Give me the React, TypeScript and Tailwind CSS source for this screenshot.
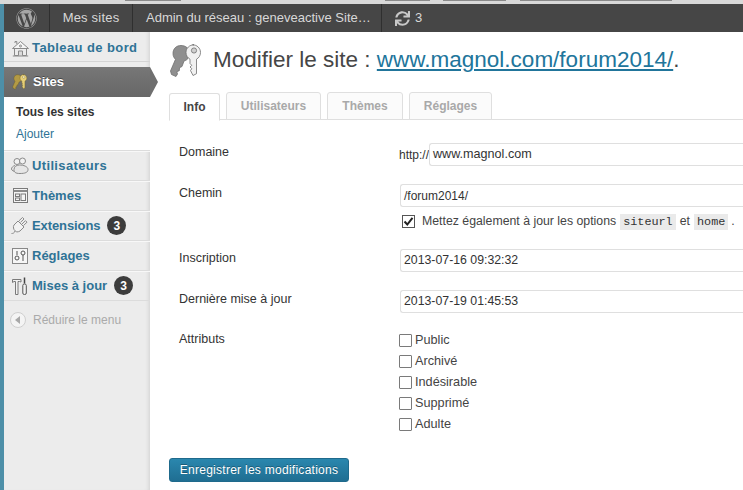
import React from "react";
import { FaWordpress, FaSync } from "react-icons/fa";

const Keys = ({ size, back = "#8f8f8f", front = "#f1f1f1", stroke = "#6f6f6f", hole = "#cfcfcf" }: { size: number; back?: string; front?: string; stroke?: string; hole?: string }) => (
  <svg width={size} height={size} viewBox="0 0 34 34" className="shrink-0">
    <path d="M12 1.500c-4.800 0-8 3.300-8 8 0 2.500 1 4.500 2.500 5.800L1.500 27l1 3.500 4.500 2 1.500-2.500-.7-2.300 2.500-1 .2-3 2.500-1.200L15 17c3.500-.8 5.500-3.800 5.500-7.500 0-4.700-3.500-8-8.500-8z" fill={back} stroke={stroke} strokeWidth="0.8" />
    <path d="M25 .8c-4.500 0-8 3.300-8 7.700 0 3 1.600 5.400 4 6.700v4.300l1.800 1.800-1.800 1.700 1.800 1.700-1.300 1.800 2.500 5 3.500-1.800V15.200c2.400-1.300 4-3.700 4-6.700 0-4.400-3.500-7.700-8-7.700z" fill={front} stroke={stroke} strokeWidth="0.8" />
    <circle cx="25" cy="6.500" r="2.600" fill={hole} stroke={stroke} strokeWidth="0.8" />
  </svg>
);

const HomeIcon = () => (
  <svg width="17" height="17" viewBox="0 0 17 17" fill="none" stroke="#8a8a8a" strokeWidth="1">
    <path d="M.5 8.500 8.500 1.500l8 7z" fill="#f6f6f6" />
    <path d="M3 3V1.500h1.800V4M2.500 8.500h12v7h-12zM.8 16h15.400" />
    <path d="M6.500 15.500v-4.500h4v4.500" fill="#dcdcdc" />
    <circle cx="8.500" cy="6" r="1" />
  </svg>
);

const UsersIcon = () => (
  <svg width="18" height="17" viewBox="0 0 18 17" fill="none" stroke="#8a8a8a" strokeWidth="1">
    <circle cx="6" cy="4.500" r="3" fill="#f2f2f2" />
    <circle cx="11.500" cy="4" r="3" fill="#f2f2f2" />
    <path d="M4 8.500c-2 .5-3.500 2-3.500 3.500S3 14.500 4.500 14.500" />
    <path d="M8.500 8c4 0 8.500 1.500 8.500 4.500s-3 4-8 4-6-1.500-6-4S5 8 8.500 8z" fill="#e6e6e6" />
  </svg>
);

const ThemesIcon = () => (
  <svg width="15" height="15" viewBox="0 0 15 15" fill="none" stroke="#7a7a7a" strokeWidth="1">
    <rect x=".5" y=".5" width="14" height="14" fill="#f4f4f4" />
    <path d="M.5 3h14" stroke="#8a8a8a" strokeWidth="2" />
    <rect x="2.500" y="6" width="4" height="2.500" />
    <rect x="2.500" y="10" width="4" height="2.500" />
    <rect x="8" y="6" width="4.500" height="6.500" />
  </svg>
);

const PlugIcon = () => (
  <svg width="18" height="17" viewBox="0 0 18 17" fill="none" stroke="#8a8a8a" strokeWidth="1">
    <path d="M.5 16.500c1.500 0 3-.5 3.500-2.500" />
    <path d="m3 12.500 2.500 2.500c1.500 0 2.500-.5 3.500-1l4-4-6-6-4 4c-.5 1-.8 2-.5 3z" fill="#f2f2f2" />
    <path d="M8 3.800 11.500.5l1.500 1.500L9.500 5.300M11 7l3.500-3.300L16 5.200l-3.500 3.300" fill="#f2f2f2" />
  </svg>
);

const SettingsIcon = () => (
  <svg width="16" height="16" viewBox="0 0 16 16" fill="none" stroke="#555" strokeWidth="1">
    <rect x=".5" y=".5" width="15" height="15" fill="#f6f6f6" stroke="#888" />
    <path d="M5 3v4M11 7v6" />
    <circle cx="5" cy="10" r="2" />
    <circle cx="11" cy="5" r="2" />
  </svg>
);

const ToolsIcon = () => (
  <svg width="17" height="18" viewBox="0 0 17 18" fill="none" stroke="#7a7a7a" strokeWidth="1">
    <path d="M.5 2.500h8.500v2.500l-1.500-.5H6v13H3.500v-13H2L.5 5.500z" fill="#f2f2f2" />
    <path d="M12.500 .5v6" stroke="#444" strokeWidth="1.500" />
    <rect x="10.800" y="7" width="3.500" height="10.500" rx="1.500" fill="#f2f2f2" stroke="#555" />
  </svg>
);

const Badge = ({ n }: { n: number }) => (
  <span className="ml-[7px] flex h-[19px] w-[19px] items-center justify-center rounded-full bg-[#3c3c3c] text-[12px] font-bold text-white">{n}</span>
);

const MenuItem = ({ icon, label, badge, labelClass = "" }: { icon: React.ReactNode; label: string; badge?: number; labelClass?: string }) => (
  <div className="flex h-[30px] items-center border-b border-[#dcdcdc] pl-[7px] shadow-[inset_0_1px_0_#f8f8f8]">
    <span className="flex w-[21px] shrink-0 items-center justify-center pr-[3px]">{icon}</span>
    <span className={"text-[13px] font-bold text-[#2f7396] " + labelClass}>{label}</span>
    {badge ? <Badge n={badge} /> : null}
  </div>
);

const Tab = ({ label, active, className }: { label: string; active?: boolean; className: string }) => (
  <div
    className={
      "flex h-[28px] items-center justify-center rounded-t-[3px] border border-[#dfdfdf] text-[12px] font-bold " +
      (active ? "relative top-[1px] border-b-white bg-white text-[#464646] " : "bg-[#fbfbfb] text-[#a9a9a9] ") +
      className
    }
  >
    {label}
  </div>
);

const Field = ({ value, className = "" }: { value: string; className?: string }) => (
  <div className={"flex h-[23px] min-w-0 flex-1 items-center rounded-l-[3px] border-y border-l border-[#dfdfdf] pl-[3px] text-[#333] " + className}>
    {value}
  </div>
);

const Row = ({ label, children, className = "" }: { label: string; children: React.ReactNode; className?: string }) => (
  <div className={"flex " + className}>
    <div className="w-[231px] shrink-0 pl-[10px] pt-[1px] text-[12.5px] leading-[16px] text-[#333]">{label}</div>
    <div className="min-w-0 flex-1">{children}</div>
  </div>
);

const Attr = ({ label }: { label: string }) => (
  <div className="-ml-[1px] flex h-[21px] items-center">
    <span className="h-[13px] w-[13px] rounded-[1px] border border-[#7a7a7a] bg-white" />
    <span className="ml-[3px] text-[12.7px] text-[#444]">{label}</span>
  </div>
);

const Code = ({ children }: { children: React.ReactNode }) => (
  <code className="bg-[#eaeaea] px-[3px] py-[1px] font-['Liberation_Mono',monospace] text-[11.8px] leading-[16px] text-[#333]">{children}</code>
);

export default function App() {
  return (
    <div className="relative flex h-[490px] w-[743px] flex-col overflow-hidden bg-white font-['Liberation_Sans',Arial,sans-serif]">
      <div className="flex h-[4px] shrink-0 items-start bg-[#d9d9d9]">
        <div className="ml-[125px] h-[1px] w-[56px] bg-[#8a8a8a]" />
        <div className="ml-[204px] h-[1px] w-[45px] bg-[#8a8a8a]" />
        <div className="ml-[13px] h-[1px] w-[63px] bg-[#8a8a8a]" />
        <div className="ml-[14px] h-[1px] w-[152px] bg-[#8a8a8a]" />
      </div>
      <div className="flex min-h-0 flex-1">
        <div className="w-[4px] shrink-0 bg-[#4d8fa8]" />
        <div className="flex min-w-0 flex-1 flex-col">
          <div className="flex h-[28px] shrink-0 items-center bg-[#464646] text-[13px] text-[#d8d8d8]">
            <div className="flex h-full w-[46px] items-center justify-center border-r border-[#2f2f2f]">
              <FaWordpress size={21} color="#a6a6a6" />
            </div>
            <div className="flex h-full w-[83px] items-center justify-center border-r border-[#2f2f2f] tracking-[0.2px]">Mes sites</div>
            <div className="flex h-full w-[249px] items-center whitespace-nowrap border-r border-[#2f2f2f] pl-[13px]">Admin du réseau : geneveactive Site…</div>
            <div className="flex h-full items-center pl-[13px]">
              <FaSync size={15} color="#c8c8c8" />
              <span className="ml-[5px]">3</span>
            </div>
          </div>
          <div className="flex min-h-0 flex-1">
            <div className="relative flex w-[146px] shrink-0 flex-col bg-[#ececec] shadow-[inset_-4px_0_4px_-3px_#cfcfcf]">
              <div className="flex h-[30px] items-center border-b border-[#d4d4d4] pl-[7px] pt-[3px]">
                <span className="flex w-[21px] shrink-0 justify-center pr-[3px]"><HomeIcon /></span>
                <span className="text-[13px] font-bold tracking-[0.4px] text-[#2f7396]">Tableau de bord</span>
              </div>
              <div className="h-[5px]" />
              <div className="relative flex h-[30px] items-center bg-gradient-to-b from-[#777777] to-[#676767] pl-[8px]">
                <span className="flex w-[21px] shrink-0 justify-start"><Keys size={16} back="#b39a45" front="#e6cf78" stroke="#6b5a20" hole="#fff7cf" /></span>
                <span className="text-[13px] font-bold text-white [text-shadow:0_-1px_0_#444]">Sites</span>
                <span className="absolute left-[146px] top-0 h-0 w-0 border-y-[15px] border-l-[8px] border-y-transparent border-l-[#6f6f6f]" />
              </div>
              <div className="flex h-[54px] flex-col border-b border-[#dcdcdc] bg-white pl-[12px] text-[12px]">
                <div className="mt-[8px] font-bold text-[#333] leading-[15px]">Tous les sites</div>
                <div className="mt-[7px] text-[#2f7396] leading-[15px]">Ajouter</div>
              </div>
              <MenuItem icon={<UsersIcon />} label="Utilisateurs" labelClass="tracking-[0.35px]" />
              <MenuItem icon={<ThemesIcon />} label="Thèmes" />
              <MenuItem icon={<PlugIcon />} label="Extensions" badge={3} labelClass="tracking-[-0.1px]" />
              <MenuItem icon={<SettingsIcon />} label="Réglages" />
              <MenuItem icon={<ToolsIcon />} label="Mises à jour" badge={3} />
              <div className="mt-[10px] flex items-center pl-[6px]">
                <span className="flex h-[16px] w-[16px] items-center justify-center rounded-full border border-[#cfcfcf] bg-[#f4f4f4]">
                  <span className="mr-[2px] h-0 w-0 border-y-[4px] border-r-[5px] border-y-transparent border-r-[#a8a8a8]" />
                </span>
                <span className="ml-[7px] text-[12px] text-[#aaaaaa]">Réduire le menu</span>
              </div>
            </div>
            <div className="flex min-w-0 flex-1 flex-col pl-[19px]">
              <div className="mt-[12px] flex items-center">
                <Keys size={34} />
                <h2 className="ml-[10px] -translate-y-[1px] whitespace-nowrap text-[22.5px] leading-[32px] text-[#464646]">
                  Modifier le site : <span className="text-[#21759b] underline">www.magnol.com/forum2014/</span>.
                </h2>
              </div>
              <div className="mt-[14px] flex h-[28px] gap-[6px] border-b border-[#dfdfdf]">
                <Tab label="Info" active className="w-[51px]" />
                <Tab label="Utilisateurs" className="w-[95px]" />
                <Tab label="Thèmes" className="w-[76px]" />
                <Tab label="Réglages" className="w-[83px]" />
              </div>
              <div className="mt-[23px] flex flex-col">
                <Row label="Domaine">
                  <div className="-ml-[1px] flex items-center text-[12px] text-[#333]">
                    <span className="w-[30px]">http://</span>
                    <Field value="www.magnol.com" className="text-[12.6px]" />
                  </div>
                </Row>
                <Row label="Chemin" className="mt-[18px]">
                  <Field value="/forum2014/" className="flex-none text-[12px]" />
                  <div className="mt-[6px] flex h-[17px] items-center text-[12.3px] text-[#444]">
                    <span className="ml-[2px] flex h-[13px] w-[13px] items-center justify-center border border-[#555] bg-white">
                      <svg width="11" height="11" viewBox="0 0 11 11"><path d="M1.500 5.500 4.300 8.500 9.500 1.800" fill="none" stroke="#222" strokeWidth="2" /></svg>
                    </span>
                    <span className="ml-[7px] whitespace-nowrap">Mettez également à jour les options</span>
                    <span className="ml-[4px]"><Code>siteurl</Code></span>
                    <span className="ml-[4px]">et</span>
                    <span className="ml-[4px]"><Code>home</Code></span>
                    <span className="ml-[3px]">.</span>
                  </div>
                </Row>
                <Row label="Inscription" className="mt-[19px]">
                  <Field value="2013-07-16 09:32:32" className="text-[12.3px]" />
                </Row>
                <Row label="Dernière mise à jour" className="mt-[18px]">
                  <Field value="2013-07-19 01:45:53" className="text-[12.3px]" />
                </Row>
                <Row label="Attributs" className="mt-[17px]">
                  <div className="flex flex-col">
                    <Attr label="Public" />
                    <Attr label="Archivé" />
                    <Attr label="Indésirable" />
                    <Attr label="Supprimé" />
                    <Attr label="Adulte" />
                  </div>
                </Row>
              </div>
              <div className="mt-[23px] flex h-[24px] w-[180px] items-center justify-center rounded-[3px] border border-[#1f6a8c] bg-gradient-to-b from-[#2a87ae] to-[#1f6e92] text-[12px] tracking-[0.27px] text-white [text-shadow:0_-1px_0_rgba(0,0,0,.3)]">
                Enregistrer les modifications
              </div>
            </div>
          </div>
        </div>
      </div>
    </div>
  );
}
